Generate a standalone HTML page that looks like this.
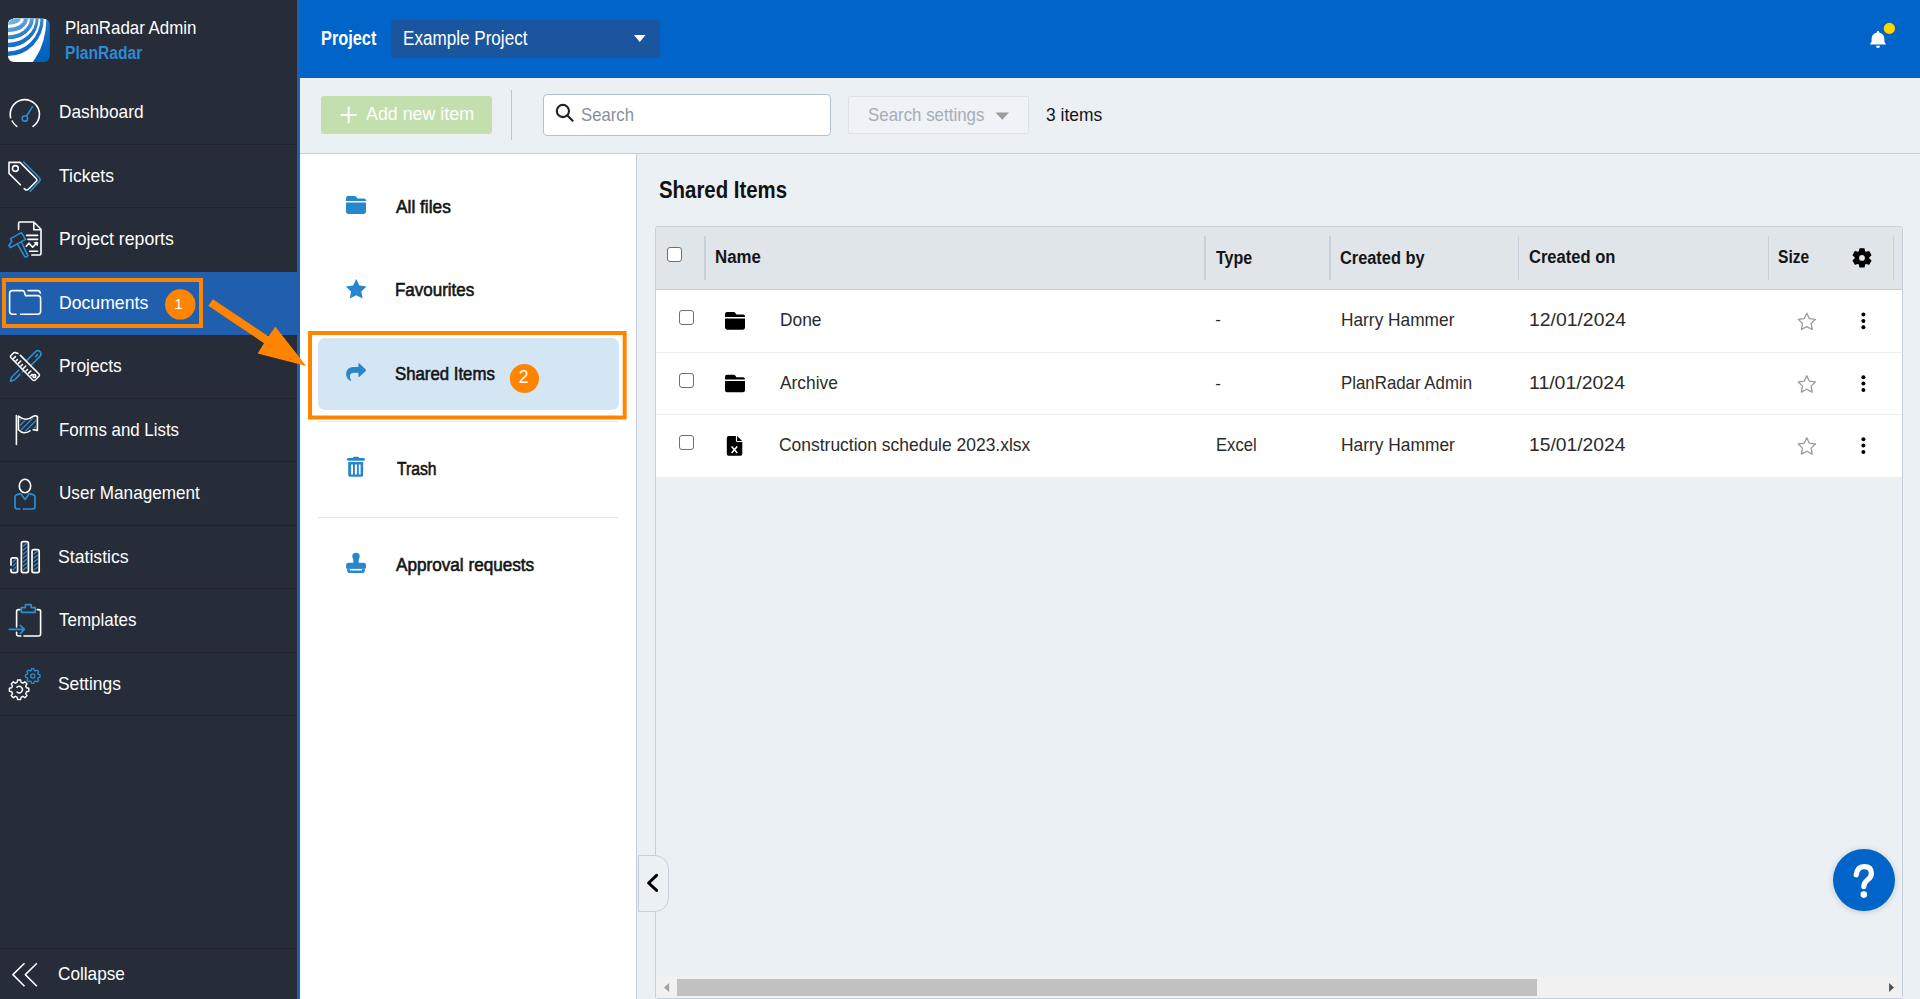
<!DOCTYPE html>
<html><head><meta charset="utf-8">
<style>
*{box-sizing:border-box;margin:0;padding:0}
html,body{width:1920px;height:999px;overflow:hidden;background:#ebf0f5;font-family:"Liberation Sans",sans-serif;color:#1b1b1b}
.a{position:absolute;white-space:nowrap;line-height:1;transform-origin:0 0}
.b{position:absolute}
.n{font-size:17px;color:#fff;left:59px}
.lp{font-size:16px;font-weight:bold;color:#141414;left:395px}
.th{font-size:16.5px;font-weight:bold;color:#151515;margin-top:-1px}
.td{font-size:17px;color:#2b2b2b}
svg{position:absolute;overflow:visible}
</style></head>
<body>
<!-- SIDEBAR -->
<div class="b" style="left:0;top:0;width:297px;height:999px;background:#262c38"></div>
<div class="b" style="left:0;top:272px;width:297px;height:63px;background:#1f5fad"></div>
<div class="b" style="left:297px;top:0;width:3px;height:999px;background:#1e60ad"></div>
<div class="b" style="left:0;top:144px;width:297px;height:1px;background:#1e232c"></div>
<div class="b" style="left:0;top:207px;width:297px;height:1px;background:#1e232c"></div>
<div class="b" style="left:0;top:398px;width:297px;height:1px;background:#1e232c"></div>
<div class="b" style="left:0;top:461px;width:297px;height:1px;background:#1e232c"></div>
<div class="b" style="left:0;top:525px;width:297px;height:1px;background:#1e232c"></div>
<div class="b" style="left:0;top:588px;width:297px;height:1px;background:#1e232c"></div>
<div class="b" style="left:0;top:652px;width:297px;height:1px;background:#1e232c"></div>
<div class="b" style="left:0;top:715px;width:297px;height:1px;background:#1e232c"></div>
<div class="b" style="left:0;top:948px;width:297px;height:1px;background:#1e232c"></div>



<!-- TOP BAR -->
<div class="b" style="left:300px;top:0;width:1620px;height:78px;background:#0064c9"></div>
<div class="b" style="left:391px;top:20px;width:269px;height:37.5px;background:#1b559d;border-radius:3px"></div>

<!-- TOOLBAR -->
<div class="b" style="left:300px;top:153px;width:1620px;height:1px;background:#c5cfda"></div>
<div class="b" style="left:321px;top:96px;width:171px;height:38px;background:#c3dfae;border-radius:3px"></div>
<div class="b" style="left:511px;top:90px;width:1px;height:50px;background:#b9c4cf"></div>
<div class="b" style="left:543px;top:94px;width:288px;height:42px;background:#fff;border:1px solid #b3c0cd;border-radius:4px"></div>
<div class="b" style="left:848px;top:96px;width:181px;height:37.5px;background:#eff2f6;border:1px solid #dce2e9;border-radius:2px"></div>

<!-- LEFT PANEL -->
<div class="b" style="left:300px;top:154px;width:336px;height:845px;background:#fff"></div>
<div class="b" style="left:636px;top:154px;width:1px;height:845px;background:#c6d0db"></div>
<div class="b" style="left:318px;top:338px;width:301px;height:72px;background:#d4e6f4;border-radius:7px"></div>
<div class="b" style="left:318px;top:421px;width:300px;height:1px;background:#e5e8eb"></div>
<div class="b" style="left:318px;top:517px;width:300px;height:1px;background:#e5e8eb"></div>

<!-- MAIN -->
<div class="b" style="left:655px;top:226px;width:1248px;height:773px;border:1px solid #c5d0db;border-radius:3px;background:#ebf0f5"></div>
<div class="b" style="left:656px;top:227px;width:1246px;height:62px;background:#e0e5ea;border-radius:2px 2px 0 0"></div>
<div class="b" style="left:656px;top:289px;width:1246px;height:1px;background:#c5d0db"></div>
<div class="b" style="left:656px;top:290px;width:1246px;height:187px;background:#fff"></div>
<div class="b" style="left:656px;top:352px;width:1246px;height:1px;background:#eceef1"></div>
<div class="b" style="left:656px;top:414px;width:1246px;height:1px;background:#eceef1"></div>
<!-- header separators -->
<div class="b" style="left:704px;top:236px;width:2px;height:44px;background:#c7d1db"></div>
<div class="b" style="left:1204px;top:236px;width:2px;height:44px;background:#c7d1db"></div>
<div class="b" style="left:1329px;top:236px;width:2px;height:44px;background:#c7d1db"></div>
<div class="b" style="left:1518px;top:236px;width:1px;height:44px;background:#c7d1db"></div>
<div class="b" style="left:1768px;top:236px;width:1px;height:44px;background:#c7d1db"></div>
<div class="b" style="left:1893px;top:236px;width:1px;height:44px;background:#c7d1db"></div>
<!-- header checkbox -->
<div class="b" style="left:667px;top:247px;width:15px;height:15px;background:#fff;border:1px solid #707070;border-radius:3px"></div>

<!-- rows -->
<div class="b" style="left:679px;top:310px;width:15px;height:15px;background:#fff;border:1px solid #707070;border-radius:3px"></div>
<div class="b" style="left:679px;top:373px;width:15px;height:15px;background:#fff;border:1px solid #707070;border-radius:3px"></div>
<div class="b" style="left:679px;top:435px;width:15px;height:15px;background:#fff;border:1px solid #707070;border-radius:3px"></div>




<!-- scrollbar -->
<div class="b" style="left:656px;top:977px;width:1246px;height:21px;background:#f1f1f1"></div>
<div class="b" style="left:677px;top:979px;width:860px;height:17px;background:#c1c1c1"></div>

<!-- collapse tab -->
<div class="b" style="left:638px;top:855px;width:31px;height:57px;background:#ebf0f5;border:1px solid #c5d0db;border-left:1px solid #c5d0db;border-radius:0 14px 14px 0"></div>

<!-- help -->
<div class="b" style="left:1833px;top:849px;width:62px;height:62px;border-radius:50%;background:#0064c8;box-shadow:0 1px 6px rgba(0,0,0,0.18)"></div>

<!-- ICONS OVERLAY -->
<svg width="1920" height="999" style="left:0;top:0" viewBox="0 0 1920 999">
<defs>
<clipPath id="lgc"><rect x="8" y="18.75" width="41.8" height="43.25" rx="6"/></clipPath>
<linearGradient id="lgg" gradientUnits="userSpaceOnUse" x1="8" y1="18" x2="30" y2="62"><stop offset="0" stop-color="#8cc0ea"/><stop offset="0.5" stop-color="#1c72c8"/><stop offset="1" stop-color="#0062c0"/></linearGradient>
</defs>
<!-- logo -->
<g clip-path="url(#lgc)">
<rect x="8" y="18.7" width="42" height="43.3" fill="url(#lgg)"/>
<g><ellipse cx="8" cy="18.75" rx="38.30" ry="56.70" fill="#fff"/><ellipse cx="8" cy="18.75" rx="35.70" ry="37.35" fill="url(#lgg)"/><ellipse cx="8" cy="18.75" rx="32.40" ry="32.75" fill="#fff"/><ellipse cx="8" cy="18.75" rx="30.60" ry="28.55" fill="url(#lgg)"/><ellipse cx="8" cy="18.75" rx="27.60" ry="23.95" fill="#fff"/><ellipse cx="8" cy="18.75" rx="25.80" ry="20.55" fill="url(#lgg)"/><ellipse cx="8" cy="18.75" rx="21.90" ry="16.45" fill="#fff"/><ellipse cx="8" cy="18.75" rx="19.90" ry="13.35" fill="url(#lgg)"/><ellipse cx="8" cy="18.75" rx="15.70" ry="9.25" fill="#fff"/><ellipse cx="8" cy="18.75" rx="12.70" ry="6.05" fill="url(#lgg)"/></g>
</g>
<!-- sidebar icons -->
<g fill="none" stroke-width="1.6" stroke-linecap="round" stroke-linejoin="round">
<!-- dashboard -->
<g transform="translate(0,85)">
<path stroke="#fff" d="M10.6 32.6 A14.6 14.6 0 1 1 33 41.4 M12.2 36 A14.6 14.6 0 0 0 16.8 41.4"/>
<circle stroke="#2b8fd6" cx="24.9" cy="33.4" r="2.7"/>
<path stroke="#2b8fd6" d="M26.6 31 L32.5 21.6"/>
</g>
<!-- tickets -->
<g transform="translate(0,150)">
<path stroke="#fff" d="M20.4 34.8 L9 23.4 L9 12.4 L20 12.4 L36.4 28.8 Q37.6 30 36.4 31.2 L28.4 39.2 Q26.4 41 24.2 38.6"/>
<circle stroke="#fff" cx="15.4" cy="18.5" r="2.9"/>
<path stroke="#2b8fd6" d="M23.6 12 L39.4 27.8 Q40.8 29.6 39.4 31.4 L30.2 41.2"/>
</g>
<!-- project reports -->
<g transform="translate(0,213)">
<path stroke="#fff" d="M18.6 16.4 L18.6 10.2 Q18.6 9 19.8 9 L33.8 9 L41 16.2 L41 40.6 Q41 42 39.6 42 L31.8 42 M33.8 9 L33.8 16.8 L41 16.8"/>
<path stroke="#fff" d="M26.6 22.4 L37.6 22.4 M28 26.4 L37.6 26.4 M29.6 38.2 L37.6 38.2 M26.2 33.2 L29 30.2 L32.6 34.2 L37 30"/>
<path stroke="#fff" fill="#fff" stroke-width="1" d="M34.6 29.6 L37.8 29.2 L37.4 32.4 Z"/>
<path stroke="#2b8fd6" d="M10.6 25.6 L21.4 19.6 L25.6 26.4 L10.4 34.6 L8.8 32.6 L11.8 28.6 Z M17.4 31.2 L24.6 43.4 Q26.4 45 27.8 42.6 L21.4 29"/>
</g>
<!-- documents -->
<g transform="translate(0,280)">
<path stroke="#fff" d="M16 34.2 L12.6 34.2 Q9.6 34.2 9.6 31.2 L9.6 13.4 Q9.6 10.6 12.4 10.6 L22.4 10.6 Q24 10.6 24.4 12 L25.4 15.6 L37.6 15.6 Q40.6 15.6 40.6 18.6 L40.6 31.2 Q40.6 34.2 37.6 34.2 L20.6 34.2 M28 10.6 L37.6 10.6 Q39.8 10.6 40.4 13"/>
</g>
<!-- projects -->
<g transform="translate(0,340)">
<path stroke="#2b8fd6" d="M26.6 20.6 L35.6 11.6 Q38 9.6 40.2 11.8 Q42 14.2 40 16.4 L30.6 25.8 M18.6 30.2 L11.6 37.2 L10.4 41.2 L14.4 40 L20 34.4 M22.2 32 L23.6 30.6 M35.6 16.6 L37.6 14.6"/>
<path stroke="#fff" d="M18 13.6 L15.2 12.6 Q14 12.4 13.2 13.2 L10.8 15.8 Q10 16.8 11 17.8 L32.8 40 Q34 41 35.2 40 L39 36.2 Q40 35 39 34 L20.4 15.4"/>
<path stroke="#fff" d="M13.6 18.4 L15.4 16.6 M16 21 L17.4 19.6 M18.4 23.4 L20.8 21 M21 26 L22.4 24.6 M23.4 28.4 L25.8 26 M26 31 L27.4 29.6 M28.4 33.4 L30.8 31 M30.8 35.8 L32.2 34.4"/>
<circle stroke="#fff" cx="34.4" cy="36" r="1.4"/>
</g>
<!-- forms -->
<g transform="translate(0,404)">
<path stroke="#fff" d="M16.4 11.6 L16.4 40.4"/>
<path stroke="#fff" d="M33.2 25.8 L37.4 26.4 L37.4 12.4 Q35.4 11.2 33 12.4 Q30 15.2 26 15.2 Q22 15.2 18.4 12.2 L18.4 25.8 Q21 28.6 24 28.8 Q27 28.8 30 26.8"/>
<clipPath id="flc"><path d="M19.6 14.6 Q22 16.6 26 16.6 Q30 16.6 33.6 13.8 Q35 13.2 36 13.6 L36 24.6 L32.6 24.4 Q27 27.4 24 27.4 Q21 27.2 19.6 25 Z"/></clipPath>
<g clip-path="url(#flc)"><path stroke="#2b8fd6" stroke-width="1.3" stroke-linecap="butt" d="M16 20 L24 12 M16 25.5 L29.5 12 M18 29 L35 12 M22.5 30 L40.5 12 M28.5 30 L40 18.5 M33.5 30 L40 23.5"/></g>
</g>
<!-- user management -->
<g transform="translate(0,467)">
<ellipse stroke="#fff" cx="25" cy="19" rx="5.7" ry="6.7"/>
<path stroke="#2b8fd6" stroke-width="1.7" d="M19.8 42 L17.6 42 Q15 42 15 39.4 L15 30 Q15 28.2 17 27.6 L20.6 26.6 L25 32.4 L29.4 26.6 L33 27.6 Q35 28.2 35 30 L35 39.4 Q35 42 32.4 42 L23.4 42"/>
</g>
<!-- statistics -->
<g transform="translate(0,531)">
<path stroke="#fff" stroke-width="1.7" d="M11 34 L11 28.6 Q11 26.8 12.8 26.8 L15.8 26.8 Q17.6 26.8 17.6 28.6 L17.6 39.8 Q17.6 41.6 15.8 41.6 L12.8 41.6 Q11 41.6 11 39.8 L11 38.4"/>
<rect stroke="#fff" stroke-width="1.7" x="21.4" y="10.6" width="7" height="31" rx="1.8"/>
<rect stroke="#fff" stroke-width="1.7" x="32" y="18.6" width="7.2" height="23" rx="1.8"/>
<path stroke="#2b8fd6" stroke-width="1.2" d="M13 31 L15.6 28.4 M13 35 L15.8 32.2 M13 39 L15.8 36.2 M23.2 15 L26.6 12.4 M23.2 19 L26.6 16.2 M23.2 23 L26.6 20.2 M23.2 27 L26.6 24.2 M23.2 31 L26.6 28.2 M23.2 35 L26.6 32.2 M23.2 39 L26.6 36.2 M33.8 23 L37.4 20.2 M33.8 27 L37.4 24.2 M33.8 31 L37.4 28.2 M33.8 35 L37.4 32.2 M33.8 39 L37.4 36.2"/>
</g>
<!-- templates -->
<g transform="translate(0,594)">
<path stroke="#fff" d="M20 15.6 L18.6 15.6 Q16.6 15.6 16.6 17.6 L16.6 33 M16.6 38.2 L16.6 40 Q16.6 42 18.6 42 L20.8 42 M24 42 L38.6 42 Q40.6 42 40.6 40 L40.6 17.6 Q40.6 15.6 38.6 15.6 L37.2 15.6"/>
<path stroke="#2b8fd6" d="M21.4 18.4 L21.4 13.6 L25.4 13.6 L25.4 10.6 L31.2 10.6 L31.2 13.6 L35.2 13.6 L35.2 18.4 Z M9.2 35.4 L24.4 35.4 M20.4 31.4 L24.4 35.4 L20.4 39.4"/>
</g>
<!-- settings -->
<g transform="translate(0,640)">
<g transform="translate(19.1 49.75) scale(0.89) translate(-18.7 -51.1)"><path stroke="#fff" stroke-width="1.6" d="M17 40.2 L20.4 40.2 L21 42.8 L23 43.7 L25.2 42.2 L27.6 44.6 L26.1 46.8 L27 48.8 L29.6 49.4 L29.6 52.8 L27 53.4 L26.1 55.4 L27.6 57.6 L25.2 60 L23 58.5 L21 59.4 L20.4 62 L17 62 L16.4 59.4 L14.4 58.5 L12.2 60 L9.8 57.6 L11.3 55.4 L10.4 53.4 L7.8 52.8 L7.8 49.4 L10.4 48.8 L11.3 46.8 L9.8 44.6 L12.2 42.2 L14.4 43.7 L16.4 42.8 Z"/>
<path stroke="#fff" stroke-width="1.6" d="M16.2 48.4 A3.6 3.6 0 1 1 16.4 53.6"/>
</g>
<g transform="translate(32.75 36) scale(0.87) translate(-32.5 -37)"><path stroke="#2b8fd6" stroke-width="1.5" d="M31.2 28.6 L33.8 28.6 L34.3 30.6 L35.8 31.3 L37.5 30.2 L39.3 32 L38.2 33.7 L38.9 35.2 L40.9 35.7 L40.9 38.3 L38.9 38.8 L38.2 40.3 L39.3 42 L37.5 43.8 L35.8 42.7 L34.3 43.4 L33.8 45.4 L31.2 45.4 L30.7 43.4 L29.2 42.7 L27.5 43.8 L25.7 42 L26.8 40.3 L26.1 38.8 L24.1 38.3 L24.1 35.7 L26.1 35.2 L26.8 33.7 L25.7 32 L27.5 30.2 L29.2 31.3 L30.7 30.6 Z"/>
<circle stroke="#2b8fd6" stroke-width="1.5" cx="32.5" cy="37" r="2.4"/>
</g>
</g>
<!-- collapse chevrons -->
<path stroke="#fff" stroke-width="1.5" stroke-linecap="butt" d="M24.5 963.2 L12.9 974.6 L24.5 986.2 M36.9 963.2 L25.3 974.6 L36.9 986.2"/>
</g>
<!-- top bar icons -->
<path fill="#fff" d="M634 35 L645.5 35 L639.75 42 Z"/>
<g fill="#fff">
<path d="M1878 30.8 Q1879.2 30.8 1879.2 32.4 Q1884.4 33.8 1884.4 39 L1884.4 41.6 L1886 44.4 L1870 44.4 L1871.6 41.6 L1871.6 39 Q1871.6 33.8 1876.8 32.4 Q1876.8 30.8 1878 30.8 Z"/>
<path d="M1876 45.8 L1880 45.8 Q1880 48 1878 48 Q1876 48 1876 45.8 Z"/>
</g>
<circle cx="1889.4" cy="28.4" r="5.6" fill="#ffd600"/>
<!-- toolbar icons -->
<path stroke="#fff" stroke-width="2" d="M348.7 106.7 L348.7 123.3 M340.6 115 L356.7 115"/>
<g fill="none" stroke="#222" stroke-width="2.1" stroke-linecap="round">
<circle cx="562.9" cy="111" r="6.1"/>
<path d="M567.4 115.5 L572.6 120.8"/>
</g>
<path fill="#9b9b9b" d="M995.6 112.6 L1009 112.6 L1002.3 119.8 Z"/>
<!-- left panel icons -->
<g fill="#2786cc">
<path d="M346 198.2 Q346 196.1 348 196.1 L354.4 196.1 Q355.8 196.1 356.6 197.3 L357.4 198.6 L364 198.6 Q366 198.6 366 200.6 L366 201 L346 201 Z"/>
<path d="M346 202.6 L366 202.6 L366 211.8 Q366 213.9 364 213.9 L348 213.9 Q346 213.9 346 211.8 Z"/>
<path d="M356.2 279 L359.3 285.4 L366.5 286.4 L361.3 291.4 L362.6 298.6 L356.2 295.2 L349.8 298.6 L351.1 291.4 L345.9 286.4 L353.1 285.4 Z"/>
<path d="M358.4 363.8 Q358.4 362.6 359.4 363.4 L365.6 369.2 Q366.5 370.2 365.6 371.2 L359.4 376.8 Q358.4 377.6 358.4 376.4 L358.4 372.8 L354.4 372.8 Q350 372.8 349.8 376.2 Q349.8 378.4 351 379.8 Q351.2 381.4 349.6 380.4 Q346 377.8 346.1 374 Q346.4 367.2 353.8 367 L358.4 367 Z"/>
<path d="M352.6 458 Q353.2 456.7 354.4 456.7 L357.6 456.7 Q358.8 456.7 359.4 458 L363.6 458 Q364.9 458 364.9 459.35 Q364.9 460.8 363.6 460.8 L348.4 460.8 Q347 460.8 347 459.35 Q347 458 348.4 458 Z"/>
<path fill-rule="evenodd" d="M348.2 462 L363.2 462 L363.2 475 Q363.2 476.8 361.4 476.8 L350 476.8 Q348.2 476.8 348.2 475 Z M351.1 464.6 L351.1 474.4 L353 474.4 L353 464.6 Z M354.9 464.6 L354.9 474.4 L356.9 474.4 L356.9 464.6 Z M358.8 464.6 L358.8 474.4 L360.6 474.4 L360.6 464.6 Z"/>
<circle cx="356" cy="556.4" r="3.7"/>
<path d="M353.2 558.6 L358.8 558.6 L358.6 563.4 L353.4 563.4 Z"/>
<path d="M348.6 562.8 L363.6 562.8 Q366 562.8 366 565.2 L366 568.6 L346.1 568.6 L346.1 565.2 Q346.1 562.8 348.6 562.8 Z"/>
<path fill-rule="evenodd" d="M347.2 568.2 L364.8 568.2 L364.8 571.1 Q364.8 572.9 363 572.9 L349 572.9 Q347.2 572.9 347.2 571.1 Z M349.8 569.1 L349.8 570.6 L362.1 570.6 L362.1 569.1 Z"/>
</g>
<!-- table icons -->
<g fill="#000">
<path d="M725 314.2 Q725 312.1 727 312.1 L733.4 312.1 Q734.8 312.1 735.6 313.3 L736.4 314.6 L743 314.6 Q745 314.6 745 316.6 L745 317 L725 317 Z"/>
<path d="M725 318.4 L745 318.4 L745 327.6 Q745 329.7 743 329.7 L727 329.7 Q725 329.7 725 327.6 Z"/>
<path d="M725 376.8 Q725 374.7 727 374.7 L733.4 374.7 Q734.8 374.7 735.6 375.9 L736.4 377.2 L743 377.2 Q745 377.2 745 379.2 L745 379.6 L725 379.6 Z"/>
<path d="M725 381 L745 381 L745 390.2 Q745 392.3 743 392.3 L727 392.3 Q725 392.3 725 390.2 Z"/>
<path d="M728.6 436 L735.9 436 L735.9 440.4 Q735.9 442 737.5 442 L742.3 442 L742.3 454 Q742.3 455.8 740.5 455.8 L728.6 455.8 Q726.8 455.8 726.8 454 L726.8 437.8 Q726.8 436 728.6 436 Z M737.1 436 L742.2 440.9 L737.1 440.9 Z"/>
</g>
<path stroke="#fff" stroke-width="1.6" d="M731.6 446.4 L737.2 453 M737.2 446.4 L731.6 453"/>
<!-- header gear -->
<g transform="translate(1862,257.9)">
<path fill="#000" stroke="#000" stroke-width="1.4" stroke-linejoin="round" d="M-2.30 -6.90 L-2.00 -8.90 L2.00 -8.90 L2.30 -6.90 Q3.00 -5.20 4.83 -5.44 L6.71 -6.18 L8.71 -2.72 L7.13 -1.46 Q6.00 0.00 7.13 1.46 L8.71 2.72 L6.71 6.18 L4.83 5.44 Q3.00 5.20 2.30 6.90 L2.00 8.90 L-2.00 8.90 L-2.30 6.90 Q-3.00 5.20 -4.83 5.44 L-6.71 6.18 L-8.71 2.72 L-7.13 1.46 Q-6.00 0.00 -7.13 -1.46 L-8.71 -2.72 L-6.71 -6.18 L-4.83 -5.44 Q-3.00 -5.20 -2.30 -6.90 Z"/>
<circle cx="0" cy="0" r="2.9" fill="#e0e5ea"/>
</g>
<!-- stars & kebab -->
<g fill="none" stroke="#9b9b9b" stroke-width="1.3" stroke-linejoin="round">
<path d="M1806.8 313.2 L1809.4 318.6 L1815.4 319.4 L1811.1 323.5 L1812.2 329.5 L1806.8 326.6 L1801.4 329.5 L1802.5 323.5 L1798.2 319.4 L1804.2 318.6 Z"/>
<path d="M1806.8 375.8 L1809.4 381.2 L1815.4 382 L1811.1 386.1 L1812.2 392.1 L1806.8 389.2 L1801.4 392.1 L1802.5 386.1 L1798.2 382 L1804.2 381.2 Z"/>
<path d="M1806.8 437.8 L1809.4 443.2 L1815.4 444 L1811.1 448.1 L1812.2 454.1 L1806.8 451.2 L1801.4 454.1 L1802.5 448.1 L1798.2 444 L1804.2 443.2 Z"/>
</g>
<g fill="#000">
<circle cx="1863.4" cy="314.6" r="2"/><circle cx="1863.4" cy="321" r="2"/><circle cx="1863.4" cy="327.3" r="2"/>
<circle cx="1863.4" cy="377.2" r="2"/><circle cx="1863.4" cy="383.6" r="2"/><circle cx="1863.4" cy="389.9" r="2"/>
<circle cx="1863.4" cy="439.2" r="2"/><circle cx="1863.4" cy="445.6" r="2"/><circle cx="1863.4" cy="451.9" r="2"/>
</g>
<!-- scrollbar arrows -->
<path fill="#a3a3a3" d="M669.1 983 L669.1 992 L664 987.5 Z"/>
<path fill="#505050" d="M1889.1 983 L1889.1 992 L1894 987.5 Z"/>
<!-- collapse chevron -->
<path fill="none" stroke="#000" stroke-width="3" stroke-linecap="round" stroke-linejoin="round" d="M656.6 875.4 L648.6 883 L656.6 890.4"/>
<!-- help ? -->
<path fill="none" stroke="#fff" stroke-width="5.2" stroke-linecap="round" d="M1856.2 874.8 Q1857.4 866.6 1864 866.6 Q1871.4 866.6 1871.4 873.4 Q1871.4 877 1867.4 880 Q1863.8 882.8 1863.8 886.6"/>
<circle cx="1863.8" cy="894.6" r="3.3" fill="#fff"/>
<!-- annotations -->
<rect x="4" y="280" width="197" height="46" fill="none" stroke="#ff8400" stroke-width="4"/>
<circle cx="180.3" cy="304.4" r="15.2" fill="#ff8400"/>
<rect x="310" y="333" width="314.7" height="84.5" fill="none" stroke="#ff8400" stroke-width="4"/>
<circle cx="524.4" cy="378.5" r="14.6" fill="#ff8400"/>
<path fill="#ff8400" d="M212.9 299.2 L268.4 336.3 L275.4 326.7 L306.2 366 L257.7 353.5 L264 343.2 L208.2 305.8 Z"/>

</svg>
<div class="a" style="left:65.09px;top:18.82px;font-size:18.5px;color:#fff;transform:scaleX(0.9127);">PlanRadar Admin</div>
<div class="a" style="left:64.67px;top:43.92px;font-size:18.8px;font-weight:bold;color:#2b8bd6;transform:scaleX(0.8315);">PlanRadar</div>
<div class="a" style="left:58.87px;top:102.98px;font-size:18.5px;color:#fff;transform:scaleX(0.9341);">Dashboard</div>
<div class="a" style="left:59.00px;top:167.08px;font-size:18.5px;color:#fff;transform:scaleX(0.9491);">Tickets</div>
<div class="a" style="left:58.55px;top:230.18px;font-size:18.5px;color:#fff;transform:scaleX(0.9546);">Project reports</div>
<div class="a" style="left:58.55px;top:293.68px;font-size:18.5px;color:#fff;transform:scaleX(0.9533);">Documents</div>
<div class="a" style="left:58.56px;top:357.07px;font-size:18.5px;color:#fff;transform:scaleX(0.9400);">Projects</div>
<div class="a" style="left:58.59px;top:420.97px;font-size:18.5px;color:#fff;transform:scaleX(0.9123);">Forms and Lists</div>
<div class="a" style="left:58.58px;top:484.07px;font-size:18.5px;color:#fff;transform:scaleX(0.9245);">User Management</div>
<div class="a" style="left:58.25px;top:548.17px;font-size:18.5px;color:#fff;transform:scaleX(0.9542);">Statistics</div>
<div class="a" style="left:59.00px;top:611.27px;font-size:18.5px;color:#fff;transform:scaleX(0.9179);">Templates</div>
<div class="a" style="left:58.06px;top:675.17px;font-size:18.5px;color:#fff;transform:scaleX(0.9400);">Settings</div>
<div class="a" style="left:58.07px;top:964.97px;font-size:18.5px;color:#fff;transform:scaleX(0.9286);">Collapse</div>
<div class="a" style="left:320.56px;top:28.83px;font-size:19.5px;font-weight:bold;color:#fff;transform:scaleX(0.8369);">Project</div>
<div class="a" style="left:402.55px;top:28.83px;font-size:19.5px;color:#fff;transform:scaleX(0.8764);">Example Project</div>
<div class="a" style="left:366.00px;top:103.85px;font-size:19px;color:#fff;transform:scaleX(0.9386);">Add new item</div>
<div class="a" style="left:580.82px;top:104.95px;font-size:19px;color:#8a8f95;transform:scaleX(0.8793);">Search</div>
<div class="a" style="left:867.51px;top:104.65px;font-size:19px;color:#a7adb4;transform:scaleX(0.8884);">Search settings</div>
<div class="a" style="left:1046.08px;top:105.25px;font-size:19px;color:#141414;transform:scaleX(0.9167);">3 items</div>
<div class="a" style="left:396.00px;top:197.90px;font-size:18px;-webkit-text-stroke:0.6px #141414;color:#141414;transform:scaleX(0.9614);">All files</div>
<div class="a" style="left:395.06px;top:280.80px;font-size:18px;-webkit-text-stroke:0.6px #141414;color:#141414;transform:scaleX(0.9434);">Favourites</div>
<div class="a" style="left:394.67px;top:365.40px;font-size:18px;-webkit-text-stroke:0.6px #141414;color:#141414;transform:scaleX(0.9321);">Shared Items</div>
<div class="a" style="left:396.50px;top:460.10px;font-size:18px;-webkit-text-stroke:0.6px #141414;color:#141414;transform:scaleX(0.8733);">Trash</div>
<div class="a" style="left:396.00px;top:555.70px;font-size:18px;-webkit-text-stroke:0.6px #141414;color:#141414;transform:scaleX(0.9524);">Approval requests</div>
<div class="a" style="left:659.21px;top:178.55px;font-size:23px;font-weight:bold;color:#111;transform:scaleX(0.8867);">Shared Items</div>
<div class="a" style="left:715.48px;top:248.25px;font-size:18.3px;font-weight:bold;color:#151515;transform:scaleX(0.9208);">Name</div>
<div class="a" style="left:1216.00px;top:248.94px;font-size:18.3px;font-weight:bold;color:#151515;transform:scaleX(0.8780);">Type</div>
<div class="a" style="left:1340.01px;top:248.94px;font-size:18.3px;font-weight:bold;color:#151515;transform:scaleX(0.8946);">Created by</div>
<div class="a" style="left:1528.60px;top:248.44px;font-size:18.3px;font-weight:bold;color:#151515;transform:scaleX(0.9043);">Created on</div>
<div class="a" style="left:1778.45px;top:248.05px;font-size:18.3px;font-weight:bold;color:#151515;transform:scaleX(0.8514);">Size</div>
<div class="a" style="left:780.06px;top:310.88px;font-size:18.5px;color:#2b2b2b;transform:scaleX(0.9372);">Done</div>
<div class="a" style="left:1341.27px;top:311.07px;font-size:18.5px;color:#2b2b2b;transform:scaleX(0.9350);">Harry Hammer</div>
<div class="a" style="left:1528.75px;top:311.18px;font-size:18.5px;color:#2b2b2b;transform:scaleX(1.0473);">12/01/2024</div>
<div class="a" style="left:780.40px;top:374.07px;font-size:18.5px;color:#2b2b2b;transform:scaleX(0.9377);">Archive</div>
<div class="a" style="left:1341.09px;top:374.27px;font-size:18.5px;color:#2b2b2b;transform:scaleX(0.9106);">PlanRadar Admin</div>
<div class="a" style="left:1528.95px;top:374.27px;font-size:18.5px;color:#2b2b2b;transform:scaleX(1.0522);">11/01/2024</div>
<div class="a" style="left:779.46px;top:436.07px;font-size:18.5px;color:#2b2b2b;transform:scaleX(0.9434);">Construction schedule 2023.xlsx</div>
<div class="a" style="left:1216.00px;top:436.27px;font-size:18.5px;color:#2b2b2b;transform:scaleX(0.8977);">Excel</div>
<div class="a" style="left:1341.06px;top:436.38px;font-size:18.5px;color:#2b2b2b;transform:scaleX(0.9392);">Harry Hammer</div>
<div class="a" style="left:1528.96px;top:436.38px;font-size:18.5px;color:#2b2b2b;transform:scaleX(1.0407);">15/01/2024</div>
<div class="a" style="left:1215.20px;top:311.35px;font-size:17px;color:#2b2b2b;">-</div>
<div class="a" style="left:1215.20px;top:374.55px;font-size:17px;color:#2b2b2b;">-</div>
<div class="a" style="left:174.20px;top:296.32px;font-size:15.5px;color:#fff;">1</div>
<div class="a" style="left:518.80px;top:369.43px;font-size:17.5px;color:#fff;">2</div>
</body></html>
